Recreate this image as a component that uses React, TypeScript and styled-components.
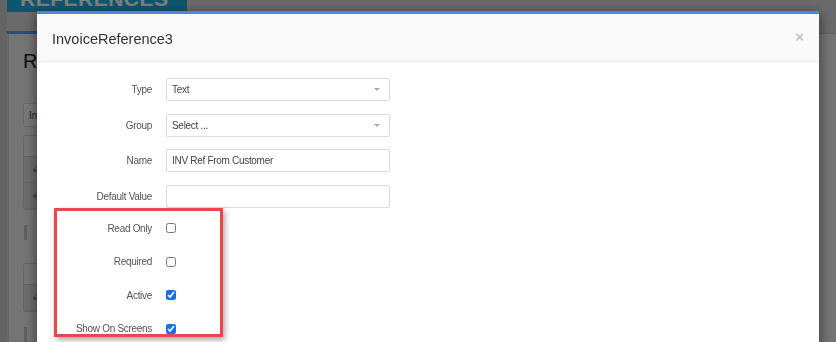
import styled, { createGlobalStyle } from 'styled-components';
import { Move } from 'lucide-react';

const GlobalStyle = createGlobalStyle`
  html, body {
    margin: 0;
    padding: 0;
    height: 100%;
    overflow: hidden;
    background: #d4d4d4;
    font-family: "Liberation Sans", Arial, sans-serif;
  }
`;

const fields = [
  { label: 'Type', value: 'Text', select: true },
  { label: 'Group', value: 'Select ...', select: true },
  { label: 'Name', value: 'INV Ref From Customer', select: false },
  { label: 'Default Value', value: '', select: false },
];

const flags = [
  { label: 'Read Only', checked: false },
  { label: 'Required', checked: false },
  { label: 'Active', checked: true },
  { label: 'Show On Screens', checked: true },
];

export default function App() {
  return (
    <>
      <GlobalStyle />
      <Page>
        <Banner>
          <BannerText>REFERENCES</BannerText>
        </Banner>
        <TabBar>
          <ActiveTab />
        </TabBar>
        <Content>
          <PageTitle>Re</PageTitle>
          <SearchBox>Inv</SearchBox>
          <Table>
            <TableHead />
            <TableRow>
              <Move size={10} strokeWidth={2.5} />
            </TableRow>
            <TableRow>
              <Move size={10} strokeWidth={2.5} />
            </TableRow>
          </Table>
          <Handle />
          <Table>
            <TableHead />
            <TableRow>
              <Move size={10} strokeWidth={2.5} />
            </TableRow>
          </Table>
          <Handle />
        </Content>
      </Page>
      <Backdrop />
      <Modal>
        <Header>
          <Title>InvoiceReference3</Title>
          <Close>×</Close>
        </Header>
        <Body>
          {fields.map((f) => (
            <FieldRow key={f.label}>
              <Label>{f.label}</Label>
              <InputBox>
                <span>{f.value}</span>
                {f.select && <Caret />}
              </InputBox>
            </FieldRow>
          ))}
          <CheckGroup>
            {flags.map((f) => (
              <CheckRow key={f.label}>
                <Label>{f.label}</Label>
                <Check type="checkbox" defaultChecked={f.checked} />
              </CheckRow>
            ))}
          </CheckGroup>
        </Body>
      </Modal>
    </>
  );
}

const Page = styled.div`
  display: flex;
  flex-direction: column;
  height: 342px;
  border-left: 7px solid #c8c8c8;
`;
const Banner = styled.div`
  display: flow-root;
  flex-shrink: 0;
  width: 180px;
  height: 12px;
  overflow: hidden;
  background: #1caddf;
`;
const BannerText = styled.div`
  margin-top: -12px;
  padding-left: 13px;
  font-size: 21px;
  font-weight: 700;
  line-height: 1;
  letter-spacing: 0.5px;
  color: #fff;
`;
const TabBar = styled.div`
  margin-top: 19px;
  height: 2px;
  border-bottom: 1px solid #c4c4c4;
`;
const ActiveTab = styled.div`
  width: 31px;
  height: 3px;
  background: #4f9ef4;
`;
const Content = styled.div`
  display: flex;
  flex-direction: column;
  align-items: flex-start;
  padding-left: 14px;
  margin-left: 1px;
  border-left: 1px solid #cbcbcb;
  flex: 1;
  background: #e8e8e8;
`;
const PageTitle = styled.div`
  margin-top: 16px;
  font-size: 20px;
  color: #222;
`;
const SearchBox = styled.div`
  margin-top: 30px;
  width: 120px;
  height: 24px;
  box-sizing: border-box;
  padding: 6px 5px;
  font-size: 10px;
  color: #444;
  background: #f2f2f2;
  border: 1px solid #d0d0d0;
  border-radius: 2px;
`;
const Table = styled.div`
  margin-top: 8px;
  width: 200px;
  border: 1px solid #cccccc;
  border-radius: 3px;
  background: #dadada;
`;
const TableHead = styled.div`
  height: 20px;
  background: #ececec;
  border-bottom: 1px solid #cccccc;
`;
const TableRow = styled.div`
  display: flex;
  align-items: center;
  height: 25px;
  padding-left: 9px;
  color: #666;
  border-bottom: 1px solid #cccccc;
`;
const Handle = styled.div`
  margin: 15px 0 15px 1px;
  width: 3px;
  height: 15px;
  background: #bdbdbd;
`;
const Backdrop = styled.div`
  position: fixed;
  inset: 0;
  background: rgba(0, 0, 0, 0.5);
`;
const Modal = styled.div`
  position: fixed;
  top: 11px;
  left: 37px;
  width: 782px;
  bottom: -40px;
  display: flex;
  flex-direction: column;
  background: #fff;
  border-top: 3px solid #4a87d9;
  box-shadow: 0 3px 12px rgba(0, 0, 0, 0.55);
`;
const Header = styled.div`
  display: flex;
  align-items: center;
  justify-content: space-between;
  height: 48px;
  padding: 2px 15px 0 15px;
  box-sizing: border-box;
  background: #f9f9f9;
  border-bottom: 1px solid #e8e8e8;
`;
const Title = styled.div`
  font-size: 14.5px;
  color: #333;
`;
const Close = styled.div`
  margin-top: -4px;
  font-size: 15px;
  font-weight: 700;
  color: #c4c4c4;
  line-height: 1;
`;
const Body = styled.div`
  display: flex;
  flex-direction: column;
  gap: 12.5px;
  padding-top: 16px;
`;
const FieldRow = styled.div`
  display: grid;
  grid-template-columns: 115px 224px;
  column-gap: 14px;
  align-items: center;
`;
const Label = styled.div`
  text-align: right;
  font-size: 10px;
  letter-spacing: -0.3px;
  color: #555;
  white-space: nowrap;
`;
const InputBox = styled.div`
  display: flex;
  align-items: center;
  justify-content: space-between;
  height: 23px;
  box-sizing: border-box;
  padding: 0 9px 0 5px;
  font-size: 10px;
  letter-spacing: -0.3px;
  color: #444;
  border: 1px solid #dcdcdc;
  border-radius: 2px;
`;
const Caret = styled.span`
  width: 0;
  height: 0;
  border-left: 3px solid transparent;
  border-right: 3px solid transparent;
  border-top: 3px solid #aaa;
`;
const CheckGroup = styled.div`
  display: flex;
  flex-direction: column;
  gap: 15.5px;
  margin: -12px 0 0 17px;
  width: 169px;
  height: 129px;
  box-sizing: border-box;
  padding-top: 8px;
  border: 3px solid #e9474b;
  box-shadow: 2px 3px 6px rgba(0, 0, 0, 0.35);
`;
const CheckRow = styled.div`
  display: grid;
  grid-template-columns: 95px auto;
  column-gap: 14px;
  align-items: center;
  flex-shrink: 0;
  height: 18px;
`;
const Check = styled.input`
  width: 10px;
  height: 10px;
  margin: 0;
  accent-color: #1a6fe8;
`;
